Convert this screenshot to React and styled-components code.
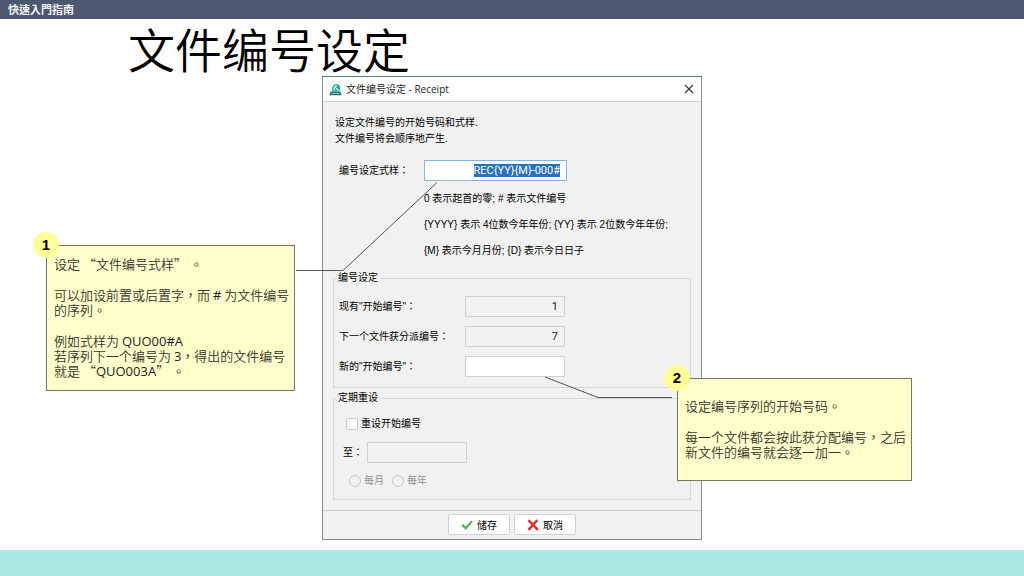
import React, { useEffect, useRef } from 'react'
import styled, { createGlobalStyle } from 'styled-components'


const GlobalStyle = createGlobalStyle`
  * {
    box-sizing: border-box;
  }

  body {
    margin: 0;
    background: #ffffff;
    font-family: "Liberation Sans", "Noto Sans CJK TC", sans-serif;
  }
`

const Page = styled.div`
  display: flex;
  flex-direction: column;
  min-height: 100vh;
  overflow-x: hidden;
`

const TopBar = styled.header`
  padding: 0 8px;
  background: #4b5870;
  color: #f4f6fa;
  font-family: "Noto Sans CJK TC", sans-serif;
  font-size: 11px;
  font-weight: 700;
  line-height: 19px;
`

const Main = styled.main`
  flex: 1;
  padding: 4px 0 10px;
`

const Title = styled.h1`
  margin: 0;
  padding: 0 0 3px 128px;
  color: #000000;
  font-family: "Noto Sans CJK SC", sans-serif;
  font-size: 47px;
  font-weight: 350;
  line-height: 50px;
`

const BottomBar = styled.footer`
  height: 26px;
  background: #abe9e4;
`

const Stage = styled.div`
  position: relative;
  width: 380px;
  margin: 0 auto;
`

const Dialog = styled.section`
  border: 1px solid #8c8c8c;
  border-top-color: #5d7f7c;
  background: #f1f1f1;
  color: #000000;
  font-size: 10px;
  line-height: 16px;
`

const DialogHeader = styled.div`
  display: flex;
  align-items: center;
  gap: 4px;
  height: 25px;
  padding: 0 7px 0 6px;
  border-bottom: 1px solid #c9cdcd;
  background: #ffffff;
`

const DialogTitle = styled.h2`
  flex: 1;
  margin: 0;
  color: #222222;
  font-family: "Open Sans", "Noto Sans CJK SC", sans-serif;
  font-size: 10px;
  font-weight: 400;
`

const CloseButton = styled.button`
  display: flex;
  padding: 0;
  border: 0;
  background: none;
`

const DialogBody = styled.form`
  margin: 0;
`

const Content = styled.div`
  padding: 13px 10px 10px;
`

const Intro = styled.p`
  margin: 0 2px 13px;
`

const PatternRow = styled.div`
  display: grid;
  grid-template-columns: 85px 143px;
  align-items: center;
  margin-left: 6px;
`

const Hints = styled.div`
  margin: 5px 0 6px 91px;
  line-height: 26px;
  white-space: nowrap;
`

const Field = styled.input`
  width: 100%;
  height: 21px;
  margin: 0;
  padding: 0 6px;
  border: 1px solid ${p => p.$active ? '#86b3e0' : '#d0d0d0'};
  border-radius: 0;
  outline: 0;
  background: ${p => p.readOnly || p.disabled ? '#f1f1f1' : '#ffffff'};
  color: #222222;
  font-family: Roboto, sans-serif;
  font-size: 11px;
  line-height: 16px;
  text-align: right;

  &::selection {
    background: #2a70bd;
    color: #ffffff;
  }
`

const Group = styled.fieldset`
  margin: 0;
  padding: 10px 5px;
  border: 1px solid #d6d6d6;

  & + & {
    margin-top: 2px;
  }
`

const Legend = styled.legend`
  margin-left: -3px;
  padding: 0 2px;
`

const NumberGrid = styled.div`
  display: grid;
  grid-template-columns: 126px 100px;
  align-items: center;
  row-gap: 9px;
`

const ResetOptions = styled.div`
  display: flex;
  flex-direction: column;
  gap: 10px;
  padding: 0 4px;
`

const CheckRow = styled.div`
  display: flex;
  padding-left: 3px;
`

const Option = styled.label`
  display: flex;
  align-items: center;
  gap: 3px;
  color: ${p => p.$muted ? '#949494' : 'inherit'};
`

const Tick = styled.input`
  appearance: none;
  width: 12px;
  height: 12px;
  margin: 0;
  border: 1px solid #c4c4c4;
  border-radius: ${p => p.type === 'radio' ? '50%' : '2px'};
  background: ${p => p.disabled ? '#f1f1f1' : '#ffffff'};
`

const UntilRow = styled.div`
  display: grid;
  grid-template-columns: 24px 100px;
  align-items: center;
`

const RadioRow = styled.div`
  display: flex;
  gap: 8px;
  padding-left: 6px;
`

const Actions = styled.div`
  display: flex;
  justify-content: center;
  gap: 4px;
  padding: 3px 0 4px;
  border-top: 1px solid #d0d0d0;
`

const Button = styled.button`
  display: flex;
  align-items: center;
  justify-content: center;
  gap: 4px;
  width: 62px;
  height: 21px;
  padding: 0;
  border: 1px solid #d2d2d2;
  border-radius: 2px;
  background: #ffffff;
  color: #000000;
  font-family: inherit;
  font-size: 10px;
`

const Leaders = styled.svg`
  position: absolute;
  top: 0;
  left: 0;
  overflow: visible;
  pointer-events: none;
`

const Callout = styled.aside`
  position: absolute;
  top: ${p => p.$top}px;
  left: ${p => p.$left}px;
  width: ${p => p.$width}px;
  padding: ${p => p.$space}px 4px ${p => p.$space + 2}px 7px;
  border: 1px solid #77775f;
  background: #ffffcc;
  color: #333329;
  font-family: "Noto Sans CJK TC", sans-serif;
  font-size: 13px;
  font-weight: 350;
  line-height: 15px;
`

const Note = styled.p`
  margin: 0;

  & + & {
    margin-top: 16px;
  }
`

const Latin = styled.span`
  color: #222222;
  font-family: "Open Sans", sans-serif;
  font-weight: 400;
  line-height: 1;
`

const Badge = styled.span`
  position: absolute;
  top: -14px;
  left: -14px;
  width: 26px;
  height: 26px;
  border-radius: 50%;
  background: #ffff99;
  color: #000000;
  font-family: "Liberation Sans", sans-serif;
  font-size: 15px;
  font-weight: 700;
  line-height: 26px;
  text-align: center;
`

const AppIcon = () => (
  <svg width="13" height="13" viewBox="0 0 13 13" aria-hidden="true">
    <path d="M3 8.500C2.400 5 3.800 1.600 7.200 1.200c2.600-.2 4 1.600 4 3.600 0 1.600-.6 2.900-1.400 3.700z" fill="#1fae9c" />
    <path d="M5 7.500c-.2-2.600.8-4.300 2.800-4.300M7.200 5.200l2.200 2.300" fill="none" stroke="#ffffff" strokeWidth="1.200" />
    <path d="M1.600 8.600h9.800l1.400 3.600H.2z" fill="#2b6f73" />
    <path d="M2.500 10.400h8" stroke="#a5dcd6" strokeWidth="0.800" />
  </svg>
)

const CloseIcon = () => (
  <svg width="10" height="10" viewBox="0 0 10 10" aria-hidden="true">
    <path d="M1 1l8 8M9 1l-8 8" stroke="#333333" strokeWidth="1.100" />
  </svg>
)

const SaveIcon = () => (
  <svg width="12" height="12" viewBox="0 0 12 12" aria-hidden="true">
    <path d="M.3 6.600L2 4.900l2.500 2.500L10.400 1.600l1.300 1.200L4.800 10.900z" fill="#56b257" />
  </svg>
)

const CancelIcon = () => (
  <svg width="12" height="12" viewBox="0 0 12 12" aria-hidden="true">
    <path d="M1.500 1.200L10.800 10.800M10.300 1.200L1.500 10.800" stroke="#d83434" strokeWidth="2.500" />
  </svg>
)

export default () => {

   const pattern = useRef(null)

   useEffect(() => {
      pattern.current.focus()
      pattern.current.select()
   }, [])

   return (
      <Page>
         <GlobalStyle/>

         <TopBar>快速入門指南</TopBar>

         <Main>
            <Title>文件编号设定</Title>

            <Stage>
               <Dialog>
                  <DialogHeader>
                     <AppIcon/>
                     <DialogTitle>文件编号设定 - Receipt</DialogTitle>
                     <CloseButton type="button">
                        <CloseIcon/>
                     </CloseButton>
                  </DialogHeader>

                  <DialogBody onSubmit={e => e.preventDefault()}>
                     <Content>
                        <Intro>
                           设定文件编号的开始号码和式样.
                           <br/>
                           文件编号将会顺序地产生.
                        </Intro>

                        <PatternRow>
                           <label htmlFor="pattern">编号设定式样：</label>
                           <Field id="pattern" ref={pattern} defaultValue="REC{YY}{M}-000#" $active/>
                        </PatternRow>

                        <Hints>
                           <div>0 表示起首的零; # 表示文件编号</div>
                           <div>{'{YYYY} 表示 4位数今年年份; {YY} 表示 2位数今年年份;'}</div>
                           <div>{'{M} 表示今月月份; {D} 表示今日日子'}</div>
                        </Hints>

                        <Group>
                           <Legend>编号设定</Legend>
                           <NumberGrid>
                              <label htmlFor="current">现有"开始编号"：</label>
                              <Field id="current" defaultValue="1" readOnly/>
                              <label htmlFor="next">下一个文件获分派编号：</label>
                              <Field id="next" defaultValue="7" readOnly/>
                              <label htmlFor="start">新的"开始编号"：</label>
                              <Field id="start"/>
                           </NumberGrid>
                        </Group>

                        <Group>
                           <Legend>定期重设</Legend>
                           <ResetOptions>
                              <CheckRow>
                                 <Option>
                                    <Tick type="checkbox"/>
                                    重设开始编号
                                 </Option>
                              </CheckRow>
                              <UntilRow>
                                 <label htmlFor="until">至：</label>
                                 <Field id="until" disabled/>
                              </UntilRow>
                              <RadioRow>
                                 <Option $muted>
                                    <Tick type="radio" name="period" disabled/>
                                    每月
                                 </Option>
                                 <Option $muted>
                                    <Tick type="radio" name="period" disabled/>
                                    每年
                                 </Option>
                              </RadioRow>
                           </ResetOptions>
                        </Group>
                     </Content>

                     <Actions>
                        <Button type="submit">
                           <SaveIcon/>
                           储存
                        </Button>
                        <Button type="button">
                           <CancelIcon/>
                           取消
                        </Button>
                     </Actions>
                  </DialogBody>
               </Dialog>

               <Leaders width="380" height="464" viewBox="0 0 380 464" fill="none" stroke="#555555" aria-hidden="true">
                  <path d="M-26 194.500L21 194.500L115 106.500"/>
                  <path d="M223 301L276 321.500H350"/>
               </Leaders>

               <Callout $top={169} $left={-276} $width={249} $space={10}>
                  <Badge>1</Badge>
                  <Note>设定 “文件编号式样” 。</Note>
                  <Note>可以加设前置或后置字，而 <Latin>#</Latin> 为文件编号的序列。</Note>
                  <Note>
                     例如式样为 <Latin>QUO00#A</Latin>
                     <br/>
                     若序列下一个编号为 <Latin>3</Latin>，得出的文件编号就是 “<Latin>QUO003A</Latin>” 。
                  </Note>
               </Callout>

               <Callout $top={302} $left={355} $width={235} $space={19}>
                  <Badge>2</Badge>
                  <Note>设定编号序列的开始号码。</Note>
                  <Note>每一个文件都会按此获分配编号，之后新文件的编号就会逐一加一。</Note>
               </Callout>
            </Stage>
         </Main>

         <BottomBar/>
      </Page>
   )
}
